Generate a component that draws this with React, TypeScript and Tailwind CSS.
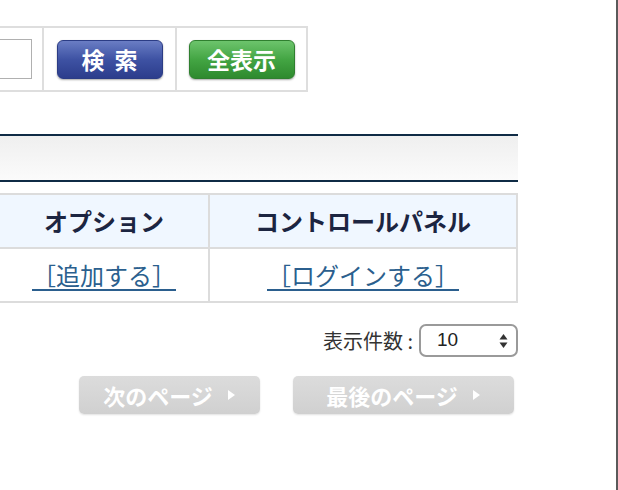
import React from "react"

const jp = { fontFamily: '"Noto Sans CJK JP", "Noto Sans", sans-serif' }

function Arrow() {
  return (
    <svg width="9" height="12" viewBox="0 0 9 12" className="ml-[14px]">
      <path d="M1 1 L8 6 L1 11 Z" fill="white" />
    </svg>
  )
}

export default function App() {
  return (
    <div
      style={jp}
      className="relative h-[490px] w-[618px] overflow-hidden border-r-2 border-[#5a5a5a] bg-white"
    >
      {/* search bar */}
      <div className="mt-[26px] flex h-[66px] w-[308px] border-y-2 border-[#dedede]">
        <div className="flex w-[44px] shrink-0 items-center justify-end overflow-hidden border-r-2 border-[#dedede] pr-[10px]">
          <input className="h-[40px] w-[60px] shrink-0 border border-[#b0b0b0] bg-white" />
        </div>
        <div className="flex w-[133px] shrink-0 items-center justify-center border-r-2 border-[#dedede]">
          <button className="flex h-[39px] w-[106px] items-center justify-center gap-[10px] rounded-[6px] border border-[#2b3c85] bg-gradient-to-b from-[#6a7dc4] via-[#3e52a3] to-[#2c3d8c] text-[23px] font-bold text-white shadow-[0_1px_2px_rgba(0,0,0,0.35)]">
            <span>検</span>
            <span>索</span>
          </button>
        </div>
        <div className="flex w-[131px] shrink-0 items-center justify-center border-r-2 border-[#dedede]">
          <button className="flex h-[39px] w-[106px] items-center justify-center rounded-[6px] border border-[#2f7f2f] bg-gradient-to-b from-[#6cc46c] via-[#43a543] to-[#2e8a2e] text-[23px] font-bold text-white shadow-[0_1px_2px_rgba(0,0,0,0.35)]">
            全表示
          </button>
        </div>
      </div>

      {/* title bar */}
      <div className="mt-[42px] h-[48px] w-[518px] border-y-2 border-[#0f2b45] bg-gradient-to-b from-[#efefef] to-[#fbfbfb]" />

      {/* table */}
      <table className="mt-[11px] w-[518px] border-collapse">
        <tbody>
          <tr className="h-[54px] bg-[#f0f7ff]">
            <th className="w-[209px] border-2 border-l-0 border-[#dcdcdc] text-[24px] font-bold text-[#1c2541]">
              オプション
            </th>
            <th className="border-2 border-[#dcdcdc] text-[24px] font-bold text-[#1c2541]">
              コントロールパネル
            </th>
          </tr>
          <tr className="h-[54px]">
            <td className="border-2 border-l-0 border-[#dcdcdc] text-center">
              <a href="#" className="text-[24px] text-[#2b5f8e] underline underline-offset-[4px]">
                ［追加する］
              </a>
            </td>
            <td className="border-2 border-[#dcdcdc] text-center">
              <a href="#" className="text-[24px] text-[#2b5f8e] underline underline-offset-[4px]">
                ［ログインする］
              </a>
            </td>
          </tr>
        </tbody>
      </table>

      {/* per page */}
      <div className="mt-[21px] flex w-[518px] items-center justify-end">
        <span className="text-[20px] text-[#333]">表示件数 : </span>
        <div className="ml-[6px] flex h-[33px] w-[99px] items-center justify-between rounded-[7px] border-2 border-[#9a9a9a] bg-white pl-[16px] pr-[8px]">
          <span style={{ fontFamily: '"Liberation Sans", sans-serif' }} className="text-[19px] text-[#222]">
            10
          </span>
          <svg width="9" height="16" viewBox="0 0 9 16">
            <path d="M4.5 1 L8.5 6.5 L0.5 6.5 Z" fill="#333" />
            <path d="M4.5 15 L8.5 9.5 L0.5 9.5 Z" fill="#333" />
          </svg>
        </div>
      </div>

      {/* paging */}
      <div className="mt-[19px] flex w-[514px] justify-end gap-[33px]">
        <button className="flex h-[38px] w-[181px] items-center justify-center rounded-[5px] bg-gradient-to-b from-[#dcdcdc] to-[#d0d0d0] text-[22px] font-bold text-white shadow-[0_1px_2px_rgba(0,0,0,0.12)]">
          次のページ
          <Arrow />
        </button>
        <button className="flex h-[38px] w-[221px] items-center justify-center rounded-[5px] bg-gradient-to-b from-[#dcdcdc] to-[#d0d0d0] text-[22px] font-bold text-white shadow-[0_1px_2px_rgba(0,0,0,0.12)]">
          最後のページ
          <Arrow />
        </button>
      </div>
    </div>
  )
}
